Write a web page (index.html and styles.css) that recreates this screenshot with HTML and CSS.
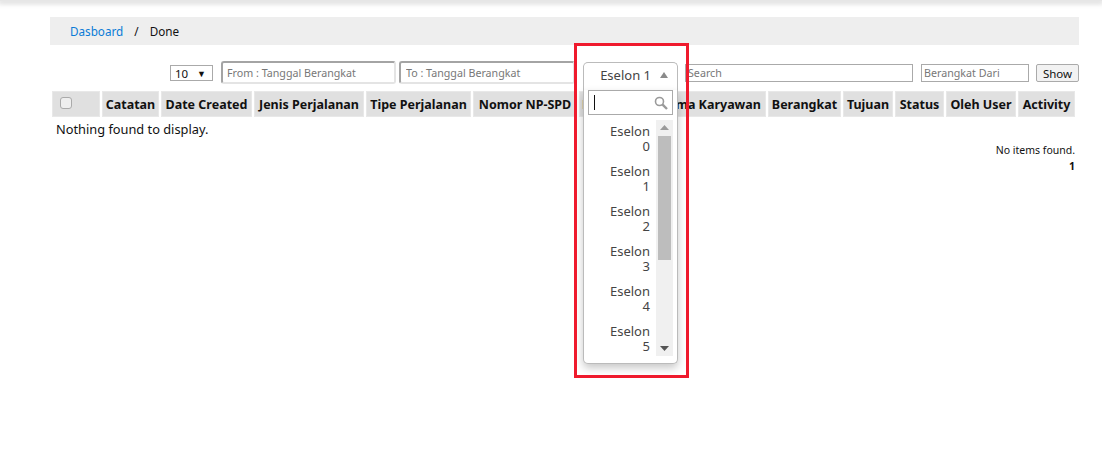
FILE: index.html
```html
<!DOCTYPE html>
<html lang="id">
<head>
<meta charset="utf-8">
<title>Done</title>
<link rel="stylesheet" href="styles.css">
</head>
<body>
<div class="topbar"></div>
<main class="content">
  <nav class="crumbs"><a href="#">Dasboard</a><span class="sep">/</span><span>Done</span></nav>
  <div class="toolbar">
    <div class="pagesize"><span>10</span><span class="pagesize-arrow">▼</span></div>
    <input class="date date-from" placeholder="From : Tanggal Berangkat">
    <input class="date date-to" placeholder="To : Tanggal Berangkat">
    <div class="eselon">
      <div class="eselon-btn"><span>Eselon 1</span><svg class="tri" width="8" height="6" viewBox="0 0 8 6"><path d="M0 6 4 0 8 6z"/></svg></div>
      <div class="eselon-menu">
        <div class="eselon-search">
          <span class="caret"></span>
          <svg width="14" height="14" viewBox="0 0 14 14" fill="none" stroke="#9a9a9a"><circle cx="5.5" cy="5.5" r="4" stroke-width="1.6"/><path d="M8.6 8.6 13 13" stroke-width="2.4"/></svg>
        </div>
        <div class="eselon-body">
          <ul class="eselon-list">
            <li>Eselon 0</li><li>Eselon 1</li><li>Eselon 2</li><li>Eselon 3</li><li>Eselon 4</li><li>Eselon 5</li>
          </ul>
          <div class="scroll">
            <svg class="scroll-up" width="9" height="5" viewBox="0 0 9 5"><path d="M0 5 4.5 0 9 5z"/></svg>
            <div class="thumb"></div>
            <svg class="scroll-down" width="9" height="5" viewBox="0 0 9 5"><path d="M0 0 4.5 5 9 0z"/></svg>
          </div>
        </div>
      </div>
      <div class="highlight"></div>
    </div>
    <input class="search" placeholder="Search">
    <input class="from" placeholder="Berangkat Dari">
    <button class="show">Show</button>
  </div>
  <table class="grid">
    <colgroup>
      <col class="c1"><col class="c2"><col class="c3"><col class="c4"><col class="c5"><col class="c6"><col class="c7"><col class="c8"><col class="c9"><col class="c10"><col class="c11"><col class="c12"><col class="c13">
    </colgroup>
    <thead>
      <tr>
        <th class="check"><span class="box"></span></th>
        <th>Catatan</th><th>Date Created</th><th>Jenis Perjalanan</th><th>Tipe Perjalanan</th><th>Nomor NP-SPD</th><th class="left">Eselon</th><th>Nama Karyawan</th><th>Berangkat</th><th>Tujuan</th><th>Status</th><th>Oleh User</th><th>Activity</th>
      </tr>
    </thead>
    <tbody>
      <tr><td colspan="13">Nothing found to display.</td></tr>
    </tbody>
  </table>
  <div class="pager">
    <div>No items found.</div>
    <div class="page">1</div>
  </div>
</main>
</body>
</html>
```
FILE: styles.css
```css
* { box-sizing: border-box; }
html, body { margin: 0; height: 100%; }
body {
  font-family: "Noto Sans", "Open Sans", sans-serif;
  font-size: 13px;
  color: #111;
  background: #fff;
  overflow: hidden;
}
.topbar {
  height: 1px;
  background: #e6e6e6;
  box-shadow: 0 1px 5px 2px #dcdcdc;
}
.content { padding: 16px 23px 0 50px; }
.crumbs {
  height: 28px;
  background: #eee;
  padding-left: 20px;
  display: flex;
  align-items: center;
  font-size: 11.7px;
}
.crumbs a { color: #0a7bd6; text-decoration: none; }
.sep { margin: 0 11px; }
.toolbar {
  display: flex;
  align-items: flex-start;
  height: 18px;
  margin-top: 19px;
  padding-left: 120px;
}
.toolbar input {
  font: inherit;
  font-size: 10.7px;
  height: 18px;
  border: 1px solid #aaa;
  padding: 0 2px;
  background: #fff;
  outline: none;
  min-width: 0;
  flex: none;
}
.toolbar input::placeholder { color: #777; opacity: 1; }
.pagesize {
  width: 43px;
  height: 16px;
  margin-top: 1px;
  border: 1px solid #aaa;
  display: flex;
  justify-content: space-between;
  align-items: center;
  padding: 0 6px 0 4px;
  font-size: 11.5px;
  flex: none;
}
.pagesize-arrow { font-size: 9px; }
.toolbar .date {
  height: 23px;
  margin-top: -3px;
  border: 2px solid #a4a4a4;
  border-right-color: #e4e4e4;
  border-bottom-color: #e4e4e4;
  border-radius: 3px;
  padding: 0 4px;
}
.toolbar .date-from { width: 175px; margin-left: 8px; }
.toolbar .date-to { width: 176px; margin-left: 3px; padding-left: 5px; }
.eselon {
  position: relative;
  width: 95px;
  margin-left: 8px;
  flex: none;
  margin-top: -2px;
}
.eselon-btn {
  height: 28px;
  border: 1px solid #bbb;
  border-bottom: 0;
  border-radius: 5px 5px 0 0;
  display: flex;
  justify-content: flex-end;
  align-items: center;
  gap: 9px;
  padding: 0 9px 3px 0;
  font-size: 13px;
  color: #444;
  background: #fff;
}
.tri { fill: #8a8a8a; }
.eselon-menu {
  position: absolute;
  top: 28px;
  left: 0;
  width: 95px;
  height: 274px;
  background: #fff;
  border: 1px solid #bbb;
  border-top: 0;
  border-radius: 0 0 5px 5px;
  box-shadow: 0 4px 8px rgba(0,0,0,.22);
  z-index: 3;
}
.eselon-search {
  width: 85px;
  height: 25px;
  margin-left: 4px;
  border: 1px solid #aaa;
  display: flex;
  align-items: center;
  justify-content: space-between;
  padding: 0 4px 0 5px;
}
.caret { width: 1px; height: 15px; background: #111; }
.eselon-body { display: flex; margin-top: 5px; margin-left: 4px; height: 236px; }
.eselon-list {
  list-style: none;
  margin: 0;
  padding: 4px 6px 0 15px;
  width: 68px;
  height: 236px;
  overflow: hidden;
  font-size: 13px;
  line-height: 15px;
  text-align: right;
  color: #444;
}
.eselon-list li { height: 40px; }
.scroll {
  width: 17px;
  background: #f0f0f0;
  position: relative;
  display: flex;
  flex-direction: column;
  align-items: center;
}
.scroll svg { fill: #9a9a9a; }
.scroll-up { margin-top: 5px; }
.thumb { width: 13px; height: 124px; background: #bdbdbd; margin-top: 6px; }
.scroll .scroll-down { position: absolute; bottom: 5px; fill: #555; }
.highlight {
  position: absolute;
  left: -9px;
  top: -19px;
  width: 115px;
  height: 335px;
  border: 3px solid #ef1a2d;
  z-index: 4;
  pointer-events: none;
}
.toolbar .search { width: 228px; margin-left: 7px; }
.toolbar .from { width: 108px; margin-left: 8px; }
.show {
  width: 43px;
  height: 18px;
  margin-left: 7px;
  padding: 0;
  font: inherit;
  font-size: 11.5px;
  color: #111;
  border: 1px solid #aaa;
  border-radius: 2px;
  background: #f2f2f2;
  flex: none;
}
.grid {
  table-layout: fixed;
  width: 1027px;
  margin-top: 7px;
  border-collapse: separate;
  border-spacing: 2px;
}
.grid th {
  height: 26px;
  padding: 0;
  background: #e0e0e0;
  border: 1px solid #e8e8e8;
  font-size: 12.5px;
  font-weight: 700;
  white-space: nowrap;
  overflow: hidden;
}
.grid th.check { text-align: left; padding-left: 7px; }
.grid th.left { text-align: left; padding-left: 2px; }
.box {
  display: block;
  width: 12px;
  height: 12px;
  margin-bottom: 3px;
  border: 1px solid #aaa;
  border-radius: 3px;
  background: #eee;
}
.grid td { padding: 1px 4px; font-size: 12.8px; }
.c1 { width: 48px; } .c2 { width: 57px; } .c3 { width: 91px; } .c4 { width: 110px; }
.c5 { width: 105px; } .c6 { width: 104px; } .c7 { width: 72px; } .c8 { width: 113px; }
.c9 { width: 73px; } .c10 { width: 50px; } .c11 { width: 49px; } .c12 { width: 70px; } .c13 { width: 57px; }
.pager { text-align: right; font-size: 10.5px; margin-top: 1px; padding-right: 4px; line-height: 16px; }
.page { font-weight: 700; }
```
